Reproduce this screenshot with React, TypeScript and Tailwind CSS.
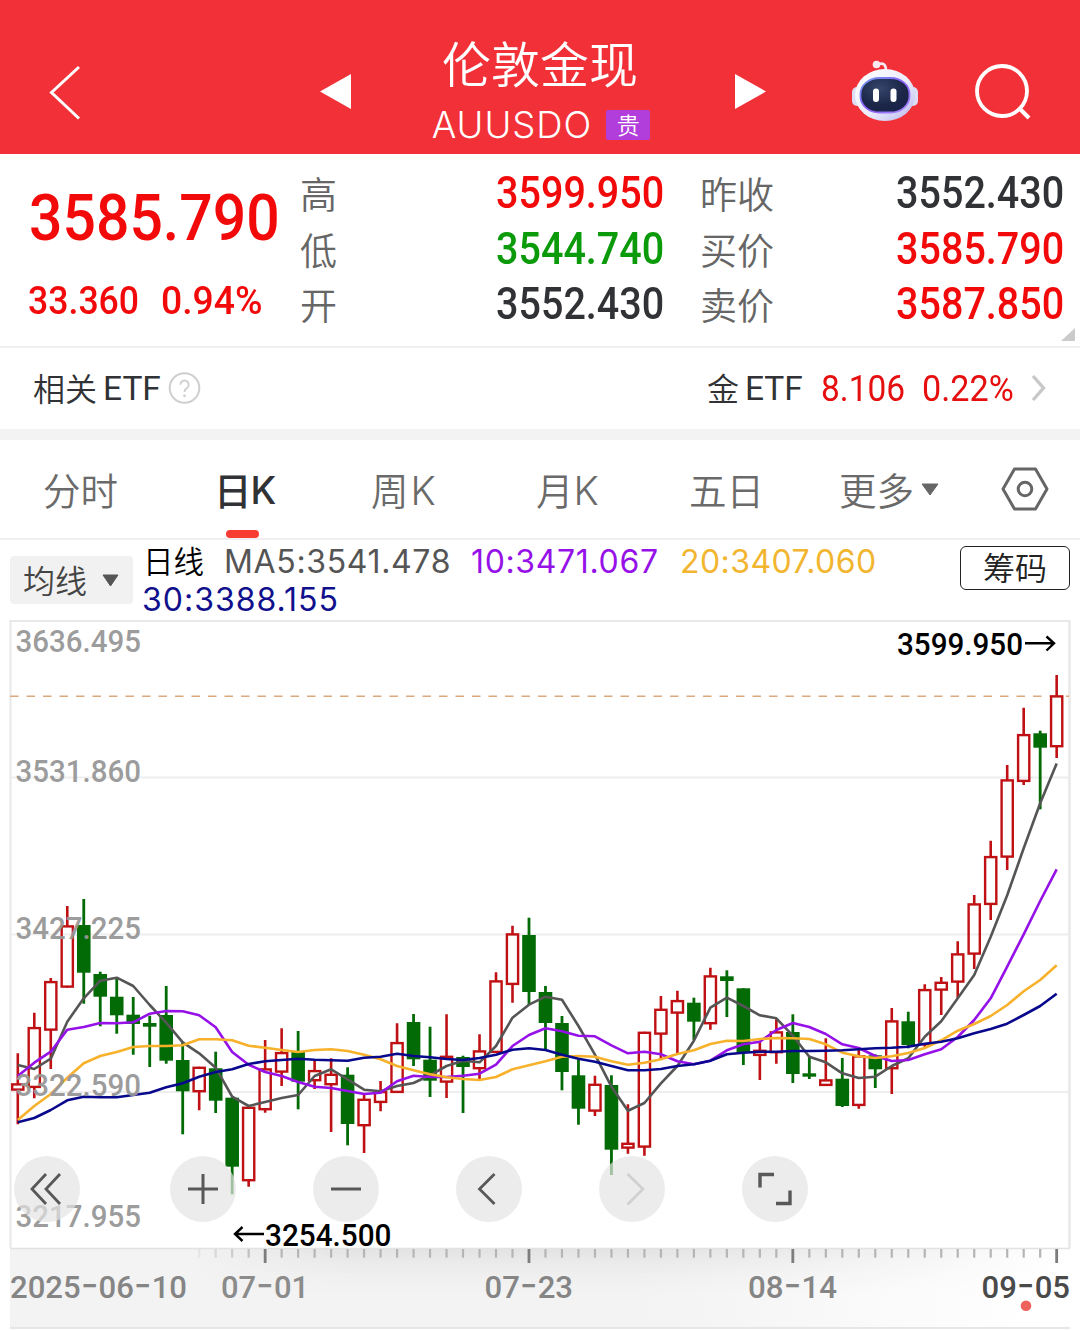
import { FC, ReactNode } from "react";

type Candle = [high: number, top: number, bottom: number, low: number, up: 0 | 1];

const FIRST_X = 17.8;
const STEP = 16.49;

const candles: Candle[] = [
  [1053.3, 1083.3, 1090.7, 1124.3, 1], [1012.7, 1027, 1088, 1098.3, 1],
  [978, 981, 1030.7, 1069, 1], [906, 925.3, 987.7, 987.7, 1],
  [899, 925, 972.7, 1003.7, 0], [971.7, 974, 996.7, 1026.3, 0],
  [977.3, 996.7, 1015.3, 1033.7, 0], [997, 1014.7, 1024, 1054.7, 0],
  [1015.7, 1023, 1026.7, 1067, 0], [986, 1015, 1060.7, 1063.7, 0],
  [1041.7, 1060, 1091.3, 1134.3, 0], [1066.7, 1066.7, 1092.3, 1110.3, 1],
  [1051.7, 1068.3, 1100.7, 1113, 0], [1097.3, 1097.7, 1166.7, 1194.3, 0],
  [1105, 1106.7, 1181.3, 1186.7, 1], [1040, 1068.3, 1110.3, 1112.7, 1],
  [1028.3, 1052, 1072.7, 1086, 1], [1031, 1052, 1081.7, 1109.3, 0],
  [1059.3, 1070, 1081.3, 1089, 1], [1058.3, 1073.7, 1085.3, 1132, 1],
  [1067.3, 1074.7, 1124, 1145.3, 0], [1094.3, 1098.7, 1126.3, 1153, 1],
  [1081, 1091, 1103, 1111.3, 1], [1023.3, 1042, 1093, 1093, 1],
  [1014, 1022, 1059.3, 1066, 0], [1026.7, 1059.7, 1080.7, 1097, 0],
  [1014.3, 1055.7, 1082.7, 1098, 1], [1055.7, 1057, 1067, 1113, 0],
  [1034.3, 1050.3, 1069.3, 1079.3, 1], [972.3, 980.3, 1053, 1053, 1],
  [925.7, 933.3, 985, 1002.7, 1], [917.7, 935, 992, 1005, 0],
  [986, 992, 1023, 1050, 0], [1016, 1023, 1072, 1090.3, 0],
  [1059.3, 1075.3, 1108.7, 1124.7, 0], [1075.7, 1083.7, 1111.7, 1116, 1],
  [1075.3, 1085, 1149.7, 1175, 0], [1104.3, 1142.7, 1148.7, 1153.7, 1],
  [1031.7, 1031.7, 1147.7, 1155.7, 1], [996, 1008.7, 1034.7, 1059.3, 1],
  [990.7, 1000, 1013.7, 1053.3, 1], [997.7, 1002.7, 1021.7, 1040, 0],
  [967.7, 975.3, 1024.3, 1029.7, 1], [970.3, 976.3, 981, 1017, 0],
  [988.3, 988.3, 1052.3, 1065, 0], [1040.7, 1049.7, 1056, 1080, 1],
  [1019.3, 1031.3, 1053.3, 1063.7, 1], [1014.3, 1032, 1074, 1083, 0],
  [1055.7, 1073.3, 1076.7, 1079, 0], [1038.3, 1079.3, 1086, 1086, 1],
  [1058, 1078.7, 1106, 1107, 0], [1048.3, 1055.3, 1106, 1108.7, 1],
  [1054.3, 1055.3, 1069.3, 1088, 0], [1008, 1020.3, 1069.3, 1094, 1],
  [1011.7, 1021.3, 1045, 1048.3, 0], [984.3, 989, 1045.3, 1046.7, 1],
  [977, 981.7, 990.7, 1015, 1], [941.3, 953.3, 982.7, 998.3, 1],
  [895, 903.3, 954.7, 969, 1], [840.7, 856, 905, 920, 1],
  [765, 779.3, 857.7, 870, 1], [707.7, 734, 782, 785, 1],
  [730.7, 733.3, 747.7, 809.3, 0], [675, 695.3, 747.3, 758, 1],
];

const averages = [
  {
    color: "#555555",
    values: [
      1065, 1069, 1058.7, 1021.7, 998.3, 980.7, 977.7, 986, 1005, 1022.7, 1042.3, 1053.3, 1067.7,
      1096.7, 1106, 1102, 1098, 1095, 1076, 1069.3, 1079.3, 1089.7, 1091.3, 1086, 1083, 1075.3,
      1066, 1060.7, 1062.3, 1046, 1017.7, 1004.7, 996.7, 999.7, 1026, 1054.7, 1086.7, 1110.7,
      1103, 1083.3, 1066, 1040.7, 1007.7, 997.7, 1006, 1015.3, 1018.3, 1035.7, 1056.7, 1062.3,
      1073.3, 1078, 1076.7, 1066, 1058.3, 1036.7, 1021.3, 998.3, 975, 936.7, 895.3, 848.3, 803.3,
      763.5,
    ],
  },
  {
    color: "#9511e8",
    values: [
      1076, 1062.7, 1051.7, 1029.7, 1027, 1023, 1023.3, 1022.3, 1013.7, 1011, 1011.3, 1015.3,
      1027.3, 1052, 1064.7, 1072, 1076, 1082, 1086.7, 1088, 1091, 1094, 1092.7, 1081.3, 1075.7,
      1077, 1077, 1075.7, 1073.7, 1064.7, 1046, 1035, 1028.3, 1031.3, 1035.7, 1036.3, 1045.3,
      1053.3, 1051.7, 1054.3, 1061.3, 1064.3, 1060.7, 1050.3, 1044.3, 1041.7, 1030, 1023, 1027,
      1034, 1044.3, 1048, 1056, 1061, 1060, 1054.3, 1049.3, 1037, 1020, 998.3, 966.7, 934.3, 901,
      869.3,
    ],
  },
  {
    color: "#f7b12b",
    values: [
      1120, 1106, 1094, 1077.7, 1063.3, 1056, 1052, 1047, 1046, 1046, 1045.3, 1039.3, 1039.3,
      1040.3, 1045.7, 1047.7, 1050, 1052, 1050, 1049.3, 1051, 1054.7, 1059.3, 1066, 1070.3,
      1074.3, 1077.3, 1079, 1080, 1077, 1069.3, 1065.3, 1061.3, 1056.7, 1056, 1056.7, 1061.3,
      1064.7, 1062.7, 1059.3, 1054, 1050.3, 1044, 1040.7, 1041, 1039, 1038, 1038.3, 1039, 1044.3,
      1052.7, 1056.3, 1058, 1056.3, 1053, 1048, 1040.3, 1030.7, 1024, 1016, 1005, 991.3, 980,
      965.3,
    ],
  },
  {
    color: "#08088c",
    values: [
      1122.3, 1118, 1110, 1100.3, 1096.7, 1097.3, 1097.3, 1095, 1092.7, 1087.3, 1083.3, 1076.7,
      1072, 1069.3, 1064, 1061.3, 1060, 1058.7, 1059.7, 1060.3, 1060.7, 1057.7, 1056.7, 1053.7,
      1056, 1057.3, 1059, 1060, 1058, 1054.7, 1049.7, 1048.3, 1050, 1054.7, 1058.7, 1061.7, 1066,
      1070.3, 1070.3, 1069, 1066, 1064.3, 1060.7, 1054.3, 1052.7, 1051.7, 1051.7, 1051, 1051,
      1050.7, 1050.3, 1049.3, 1048.3, 1047.7, 1046.7, 1043.7, 1041.7, 1038.3, 1033.3, 1029,
      1023.7, 1015, 1006, 993.7,
    ],
  },
];

const priceLabels = [
  { text: "3636.495", y: 652 },
  { text: "3531.860", y: 782 },
  { text: "3427.225", y: 939 },
  { text: "3322.590", y: 1096 },
  { text: "3217.955", y: 1226.5 },
];

const dates = [
  { text: "2025-06-10", x: 10, width: 177, color: "#858585" },
  { text: "07-01", x: 221, width: 88, color: "#8b8b8b" },
  { text: "07-23", x: 484.5, width: 88.5, color: "#858585" },
  { text: "08-14", x: 748, width: 89, color: "#858585" },
  { text: "09-05", x: 981.5, width: 88.5, color: "#4a4a4a" },
];

const xOf = (index: number) => FIRST_X + index * STEP;

const Robot: FC = () => (
  <svg width="68" height="64" viewBox="0 0 68 64">
    <defs>
      <linearGradient id="shell" x1="0" y1="0" x2="1" y2="1">
        <stop offset="0" stopColor="#ffffff" />
        <stop offset="0.55" stopColor="#ececfb" />
        <stop offset="1" stopColor="#b9b4ee" />
      </linearGradient>
      <linearGradient id="rim" x1="0" y1="0" x2="1" y2="1">
        <stop offset="0" stopColor="#6f9cf0" />
        <stop offset="0.5" stopColor="#8b5cf6" />
        <stop offset="1" stopColor="#a78bfa" />
      </linearGradient>
      <radialGradient id="face" cx="0.4" cy="0.3" r="0.8">
        <stop offset="0" stopColor="#34456b" />
        <stop offset="0.6" stopColor="#1c2748" />
        <stop offset="1" stopColor="#18204a" />
      </radialGradient>
    </defs>
    <path d="M26 5.500 C33 3 35 6 35 12" fill="none" stroke="#f6e9f2" strokeWidth="2.6" />
    <circle cx="25.500" cy="5.500" r="3.800" fill="#fbe9ee" />
    <rect x="1" y="28" width="10" height="19" rx="5" fill="#dcdcf5" />
    <rect x="57" y="28" width="10" height="19" rx="5" fill="#dcdcf5" />
    <ellipse cx="34" cy="36" rx="30" ry="26" fill="url(#shell)" />
    <rect x="9.500" y="19" width="49" height="34.500" rx="19" ry="16" fill="url(#face)" stroke="url(#rim)" strokeWidth="1.800" />
    <rect x="22" y="29.500" width="6" height="13.500" rx="3" fill="#fff" />
    <rect x="39.500" y="29.500" width="6" height="13.500" rx="3" fill="#fff" />
  </svg>
);

const Header: FC = () => (
  <header className="h-[154px] bg-[#f23038] flex items-start text-white">
    <svg className="mt-[64px] ml-[48px]" width="34" height="58" viewBox="0 0 34 58">
      <path d="M31 3 L3.500 28.500 L31 54.500" fill="none" stroke="#fff" strokeWidth="3" />
    </svg>
    <svg className="mt-[73px] ml-[237px]" width="33" height="37" viewBox="0 0 33 37">
      <path d="M1 18.500 L32 1 V36 Z" fill="#fff" />
    </svg>
    <div className="ml-[58px] w-[260px] mt-[27px] flex flex-col items-center">
      <h1 className="text-[49px] leading-[70px] font-[350] whitespace-nowrap">伦敦金现</h1>
      <div className="flex items-center mt-[6px] ml-[2px] h-[44px] gap-[14px]">
        <span className="font-[Inter] font-light text-[36.500px] leading-[44px] tracking-[1px]">AUUSDO</span>
        <span className="w-[44px] h-[30px] rounded-[2px] bg-[#b13ddb] font-[350] text-[23px] leading-[28px] text-center">
          贵
        </span>
      </div>
    </div>
    <svg className="mt-[73px] ml-[64px]" width="33" height="37" viewBox="0 0 33 37">
      <path d="M32 18.500 L1 1 V36 Z" fill="#fff" />
    </svg>
    <div className="mt-[59px] ml-[84px]">
      <Robot />
    </div>
    <svg className="mt-[62px] ml-[55px]" width="60" height="60" viewBox="0 0 60 60">
      <circle cx="28" cy="29" r="25" fill="none" stroke="#fff" strokeWidth="3.800" />
      <path d="M45 46 L55 56" stroke="#fff" strokeWidth="4" />
    </svg>
  </header>
);

type QuoteRow = { label: string; value: string; color: string };

const leftQuotes: QuoteRow[] = [
  { label: "高", value: "3599.950", color: "text-[#f20a0a]" },
  { label: "低", value: "3544.740", color: "text-[#0a9a0a]" },
  { label: "开", value: "3552.430", color: "text-[#303235]" },
];

const rightQuotes: QuoteRow[] = [
  { label: "昨收", value: "3552.430", color: "text-[#303235]" },
  { label: "买价", value: "3585.790", color: "text-[#f20a0a]" },
  { label: "卖价", value: "3587.850", color: "text-[#f20a0a]" },
];

const QuoteColumn: FC<{ rows: QuoteRow[]; className: string }> = ({ rows, className }) => (
  <div className={className}>
    {rows.map((row) => (
      <div key={row.label} className="h-[55.500px] flex items-center justify-between">
        <span className="text-[37px] leading-none font-[350] text-[#666]">{row.label}</span>
        <span
          className={`font-[Roboto] font-medium text-[43.500px] leading-none inline-block origin-right scale-x-[0.908] ${row.color}`}
        >
          {row.value}
        </span>
      </div>
    ))}
  </div>
);

const Quote: FC = () => (
  <section className="relative h-[194px] border-b-2 border-[#efefef] flex">
    <div className="w-[300px] pl-[28px] text-[#f20a0a] font-[Roboto] font-medium">
      <div className="mt-[33px] ml-[1px] h-[64px] text-[64px] leading-[64px] origin-left scale-x-[0.92]">3585.790</div>
      <div className="mt-[30px] flex text-[38.500px] leading-[40px]">
        <span className="w-[133px] origin-left scale-x-[0.925]">33.360</span>
        <span className="origin-left scale-x-[0.97]">0.94%</span>
      </div>
    </div>
    <QuoteColumn rows={leftQuotes} className="w-[364px] pt-[12px]" />
    <QuoteColumn rows={rightQuotes} className="w-[364px] pt-[12px] ml-[36px]" />
    <svg className="absolute right-[5px] bottom-[5px]" width="14" height="13" viewBox="0 0 14 13">
      <path d="M14 0 V13 H0 Z" fill="#cbcbcb" />
    </svg>
  </section>
);

const EtfRow: FC = () => (
  <section className="h-[92px] border-b-[11px] border-[#f3f3f3] flex items-center pl-[33px] pr-[33px] text-[#303235] text-[32px] leading-none">
    <span className="font-[350] mb-[4px]">相关</span>
    <span className="font-[Roboto] text-[33.500px] ml-[6px] w-[65px]">ETF</span>
    <svg width="33" height="33" viewBox="0 0 33 33">
      <circle cx="16.500" cy="16" r="14.800" fill="none" stroke="#cfcfcf" strokeWidth="2" />
      <path d="M12.300 12.700 a4.200 4.200 0 1 1 6.300 3.700 q-2.100 1.200 -2.100 3.600" fill="none" stroke="#cfcfcf" strokeWidth="1.800" />
      <circle cx="16.500" cy="23.800" r="1.400" fill="#cfcfcf" />
    </svg>
    <span className="ml-auto font-[350] mb-[4px]">金</span>
    <span className="font-[Roboto] text-[33.500px] ml-[6px] w-[76px]">ETF</span>
    <span className="font-[Roboto] text-[36px] w-[101px] text-[#e60f0f] origin-left scale-x-[0.93]">8.106</span>
    <span className="font-[Roboto] text-[36px] w-[109px] text-[#e60f0f] origin-left scale-x-[0.95]">0.22%</span>
    <svg className="mb-[1px]" width="16" height="30" viewBox="0 0 16 30">
      <path d="M2 3 L12.500 15 L2 27" fill="none" stroke="#c8c8c8" strokeWidth="3.400" />
    </svg>
  </section>
);

const Tab: FC<{ className: string; children: ReactNode }> = ({ className, children }) => (
  <div className={`h-full flex items-center whitespace-nowrap ${className}`}>{children}</div>
);

const Tabs: FC = () => (
  <nav className="h-[100px] border-b-2 border-[#efefef] flex items-center pl-[43px] text-[37.500px] leading-none font-[350] text-[#6a6a6a]">
    <Tab className="w-[171px]">分时</Tab>
    <Tab className="relative w-[157px] font-medium text-[#303235]">
      日<span className="font-[Inter] font-medium mt-[3px] -ml-[1px]">K</span>
      <span className="absolute left-[12px] bottom-0 w-[33px] h-[8.500px] rounded-full bg-[#f83c34]" />
    </Tab>
    <Tab className="w-[165px]">
      周<span className="font-[Inter] font-light text-[39px] mt-[2px] ml-[2px]">K</span>
    </Tab>
    <Tab className="w-[153px]">
      月<span className="font-[Inter] font-light text-[39px] mt-[2px]">K</span>
    </Tab>
    <Tab className="w-[150px]">五日</Tab>
    <Tab className="w-[162px] gap-[7px]">
      更多
      <svg width="18" height="13" viewBox="0 0 18 13">
        <path d="M1 1 H17 L9 12 Z" fill="#666" stroke="#666" strokeLinejoin="round" />
      </svg>
    </Tab>
    <svg width="48" height="44" viewBox="0 0 48 44">
      <path d="M13.500 2 H34.500 L46 22 L34.500 42 H13.500 L2 22 Z" fill="none" stroke="#666" strokeWidth="3" strokeLinejoin="round" />
      <circle cx="24" cy="22" r="6.800" fill="none" stroke="#666" strokeWidth="3" />
    </svg>
  </nav>
);

const AverageBar: FC = () => (
  <section className="h-[80px] flex items-start pl-[10px] pr-[10px]">
    <button className="mt-[16px] w-[123px] h-[48px] rounded bg-[#f1f1f1] flex items-center pl-[13px] gap-[15px] text-[32px] leading-none text-[#444]">
      <span className="font-[350] mb-[2px]">均线</span>
      <svg width="17" height="13" viewBox="0 0 17 13">
        <path d="M1 1 H16 L8.500 12 Z" fill="#555" stroke="#555" strokeLinejoin="round" />
      </svg>
    </button>
    <div className="ml-[9px] mt-[3px] w-[760px] font-[Inter] text-[32px] leading-[38px] tracking-[0.65px]">
      <div className="flex h-[38px] whitespace-nowrap">
        <span className="w-[82px] pl-[1px] -mt-[2px] text-[30.500px] tracking-normal font-[350] font-['Noto_Sans_CJK_SC'] text-black">
          日线
        </span>
        <span className="w-[247px] text-[#555]">MA5:3541.478</span>
        <span className="w-[209px] text-[#9511e8]">10:3471.067</span>
        <span className="tracking-[0.45px] text-[#f2b530]">20:3407.060</span>
      </div>
      <div className="tracking-[1px] text-[#10108c]">30:3388.155</div>
    </div>
    <button className="mt-[6px] ml-auto w-[110px] h-[44px] rounded-md border-[1.500px] border-[#222] font-[350] text-[32px] leading-[38px] pb-[4px] text-[#222]">
      筹码
    </button>
  </section>
);

const CandleShape: FC<{ candle: Candle; index: number }> = ({ candle, index }) => {
  const [high, top, bottom, low, up] = candle;
  const x = xOf(index);
  if (!up) {
    return (
      <g fill="#026b05">
        <rect x={x - 1.4} y={high} width={2.8} height={low - high} />
        <rect x={x - 6.8} y={top} width={13.6} height={bottom - top} />
      </g>
    );
  }
  return (
    <g stroke="#bf1114" fill="none">
      <path d={`M${x} ${high} V${top + 1} M${x} ${bottom - 1} V${low}`} strokeWidth={2.6} />
      <rect x={x - 5.6} y={top + 1.1} width={11.2} height={bottom - top - 2.2} strokeWidth={2.4} />
    </g>
  );
};

const DateLabel: FC<(typeof dates)[number]> = ({ text, x, width, color }) => (
  <text x={x} y={1298} fontSize={32} fontWeight={500} fill={color} textLength={width} lengthAdjust="spacingAndGlyphs">
    {text.split("-").map((part, i) => (
      <tspan key={i}>
        {i > 0 && (
          <tspan fontFamily="Inter" fontSize={40} fontWeight={400}>
            -
          </tspan>
        )}
        {part}
      </tspan>
    ))}
  </text>
);

const KLineChart: FC = () => (
  <svg className="block" width="1080" height="710" viewBox="0 620 1080 710" fontFamily="Roboto, sans-serif">
    <defs>
      <linearGradient id="axis" x1="0" x2="1" y1="0" y2="0">
        <stop offset="0.6" stopColor="#f3f3f3" />
        <stop offset="0.97" stopColor="#ffffff" />
      </linearGradient>
      <linearGradient id="shade" x1="0" x2="0" y1="0" y2="1">
        <stop offset="0" stopColor="#dedede" stopOpacity="0.8" />
        <stop offset="1" stopColor="#eeeeee" stopOpacity="0" />
      </linearGradient>
      <linearGradient id="fade" x1="0" x2="1" y1="0" y2="0">
        <stop offset="0.17" stopColor="#000" />
        <stop offset="0.32" stopColor="#fff" />
        <stop offset="0.6" stopColor="#fff" />
        <stop offset="1" stopColor="#000" />
      </linearGradient>
      <mask id="shadeMask">
        <rect x="10" y="1248" width="1060" height="80" fill="url(#fade)" />
      </mask>
    </defs>

    <rect x="10" y="1248" width="1060" height="80" fill="url(#axis)" />
    <rect x="10" y="1248" width="1060" height="46" fill="url(#shade)" mask="url(#shadeMask)" />
    <path d="M10 1328 H1070" stroke="#e6e6e6" strokeWidth="2" />

    <path d="M10 777.500 H1069 M10 934.500 H1069 M10 1092 H1069" stroke="#eeeeee" strokeWidth="2" />
    <path d="M9 621 H1070" stroke="#e8e8e8" strokeWidth="2" />
    <path d="M10.500 620 V1248" stroke="#e8e8e8" strokeWidth="2" />
    <path d="M1069.500 620 V1248" stroke="#e8e8e8" strokeWidth="2.500" />
    <path d="M10 1248.500 H1070" stroke="#e2e2e2" strokeWidth="1.500" />
    <path d="M10 696.300 H1069" stroke="#dba97f" strokeWidth="1.600" strokeDasharray="8.500 8" />

    {candles.map((candle, index) => (
      <CandleShape key={index} candle={candle} index={index} />
    ))}
    {averages.map((line) => (
      <polyline
        key={line.color}
        points={line.values.map((y, i) => `${xOf(i)},${y}`).join(" ")}
        fill="none"
        stroke={line.color}
        strokeWidth={2.6}
        strokeLinejoin="round"
      />
    ))}

    {priceLabels.map((label) => (
      <text
        key={label.text}
        x={15.5}
        y={label.y}
        fontSize={32}
        fontWeight={500}
        fill="#969696"
        fillOpacity={0.95}
        textLength={125.5}
        lengthAdjust="spacingAndGlyphs"
      >
        {label.text}
      </text>
    ))}

    <g fontSize={32} fontWeight={500} fill="#000">
      <text x={897} y={655} textLength={126} lengthAdjust="spacingAndGlyphs">
        3599.950
      </text>
      <text x={265} y={1245.5} textLength={126.5} lengthAdjust="spacingAndGlyphs">
        3254.500
      </text>
    </g>
    <g stroke="#000" strokeWidth="2.400" fill="none">
      <path d="M1025 643.300 H1054 M1046.500 636.500 L1054 643.300 L1046.500 650.500" />
      <path d="M264 1234 H235 M242.500 1227 L235 1234 L242.500 1241" />
    </g>

    {candles.map((_, i) => {
      if (i < 11) return null;
      const major = i % 16 === 15;
      return (
        <rect
          key={i}
          x={xOf(i) - (major ? 1.4 : 1.1)}
          y={1249}
          width={major ? 2.8 : 2.2}
          height={major ? 14 : 8.7}
          fill={major ? "#7d7d7d" : "#b5b5b5"}
          opacity={i < 15 ? (i - 10) / 5 : 1}
        />
      );
    })}
    {dates.map((date) => (
      <DateLabel key={date.text} {...date} />
    ))}
    <circle cx="1026" cy="1305.700" r="5.300" fill="#ee625c" />
  </svg>
);

const controls = [
  { name: "rewind", d: "M32 18 L18 33 L32 48 M46 18 L32 33 L46 48", width: 2.8, color: "#585858" },
  { name: "zoom in", d: "M18 33 H48 M33 18 V48", width: 3, color: "#585858" },
  { name: "zoom out", d: "M18 33 H48", width: 3, color: "#585858" },
  { name: "previous", d: "M38.500 18 L23.500 33 L38.500 48", width: 2.8, color: "#585858" },
  { name: "next", d: "M28.500 18 L44 33 L28.500 48.500", width: 2.8, color: "#d0d0d0" },
  { name: "fullscreen", d: "M18 31.500 V18.500 H32 M48 34.500 V47.500 H34", width: 3.4, color: "#585858" },
];

const Controls: FC = () => (
  <div className="absolute left-[14px] top-[536px] flex gap-[77px]">
    {controls.map((control, i) => (
      <button
        key={control.name}
        aria-label={control.name}
        className={`size-[66px] rounded-full bg-[#e4e4e4]/70 ${i === 0 ? "mr-[13px]" : ""}`}
      >
        <svg width="66" height="66" viewBox="0 0 66 66">
          <path d={control.d} fill="none" stroke={control.color} strokeWidth={control.width} />
        </svg>
      </button>
    ))}
  </div>
);

export default function App() {
  return (
    <div className="w-[1080px] h-[1330px] overflow-hidden bg-white font-['Noto_Sans_CJK_SC',sans-serif]">
      <Header />
      <Quote />
      <EtfRow />
      <Tabs />
      <AverageBar />
      <div className="relative">
        <KLineChart />
        <Controls />
      </div>
    </div>
  );
}
